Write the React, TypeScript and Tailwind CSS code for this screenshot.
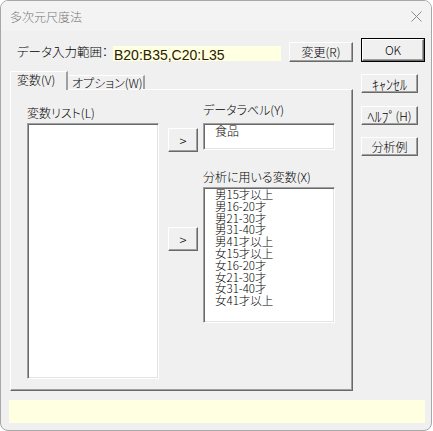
const jp = "font-['Noto_Sans_CJK_JP',sans-serif] [font-feature-settings:'palt'] font-light text-black";

const raised =
  "flex items-center justify-center border border-t-white border-l-white border-r-[#696969] border-b-[#696969] bg-[#f0f0f0] shadow-[inset_-1px_-1px_0_#a0a0a0] text-[12px] leading-none whitespace-nowrap";

const sunken =
  "border border-t-[#a0a0a0] border-l-[#a0a0a0] border-r-white border-b-white bg-white shadow-[inset_1px_1px_0_#696969,inset_-1px_-1px_0_#e3e3e3]";

const items = [
  "男15才以上",
  "男16-20才",
  "男21-30才",
  "男31-40才",
  "男41才以上",
  "女15才以上",
  "女16-20才",
  "女21-30才",
  "女31-40才",
  "女41才以上",
];

export default function App() {
  return (
    <div className={`w-[433px] h-[431px] bg-white ${jp}`}>
      <div className="w-[432px] h-[431px] flex flex-col bg-[#f0f0f0] border border-[#a8a8a8] rounded-[8px] overflow-hidden">
        {/* title bar */}
        <div className="h-[30px] shrink-0 flex items-center justify-between bg-[#f3f3f3] pl-[9px] pr-[9px]">
          <span className="text-[12px] text-[#777] mt-[1px]">多次元尺度法</span>
          <svg width="11" height="11" viewBox="0 0 11 11" className="mt-[1px]">
            <path d="M0.5 0.5 L10.5 10.5 M10.5 0.5 L0.5 10.5" stroke="#8a8a8a" strokeWidth="1" />
          </svg>
        </div>

        <div className="flex">
          {/* left column */}
          <div className="ml-[9px] w-[343px]">
            <div className="mt-[7px] h-[24px] flex items-start">
              <span className="ml-[7px] mt-[6px] text-[12.5px] leading-[16px] w-[96px] whitespace-nowrap">データ入力範囲：</span>
              <div className="mt-[8px] h-[15px] w-[168px] bg-[#ffffe1] flex items-center pl-[1px]">
                <span className="font-['Liberation_Sans',sans-serif] font-normal text-[14px] text-[#2a2000] leading-none mt-[2px]">
                  B20:B35,C20:L35
                </span>
              </div>
              <button className={`${raised} ml-[8px] mt-[4px] w-[64px] h-[20px]`}>変更(R)</button>
            </div>

            {/* tabs */}
            <div className="mt-[9px] h-[18px] flex items-end">
              <div className="relative z-10 -mb-[1px] h-[19px] w-[58px] bg-[#f0f0f0] border-l border-t border-white border-r-2 border-r-[#a0a0a0] flex items-start pl-[6px] pt-[1px] text-[12px] leading-[14px] whitespace-nowrap">
                変数(V)
              </div>
              <div className="h-[14px] w-[77px] border-t border-white border-r-2 border-r-[#a0a0a0] flex items-start pl-[4px] text-[12px] leading-[13px] whitespace-nowrap">
                オプション(W)
              </div>
            </div>

            {/* panel */}
            <div className="h-[302px] border border-t-white border-l-white border-r-[#696969] border-b-[#696969] shadow-[inset_-1px_-1px_0_#a0a0a0] flex">
              <div className="ml-[16px] w-[132px] pt-[16px]">
                <div className="h-[14px] text-[12px] leading-[14px]">変数リスト(L)</div>
                <div className={`${sunken} mt-[3px] h-[256px]`} />
              </div>

              <div className="ml-[9px] w-[30px] flex flex-col">
                <button className={`${raised} mt-[38px] h-[24px] w-[30px] text-[13px]`}>&gt;</button>
                <button className={`${raised} mt-[75px] h-[24px] w-[30px] text-[13px]`}>&gt;</button>
              </div>

              <div className="ml-[5px] w-[132px] pt-[13px]">
                <div className="h-[14px] text-[12px] leading-[14px]">データラベル(Y)</div>
                <div className={`${sunken} mt-[6px] h-[27px] pl-[11px] pt-[1px] text-[12px] leading-[12px]`}>
                  食品
                </div>
                <div className="mt-[20px] h-[14px] text-[12px] leading-[14px]">分析に用いる変数(X)</div>
                <div className={`${sunken} mt-[3px] h-[136px] pl-[11px] pt-[1px] text-[11.5px] leading-[11.8px]`}>
                  {items.map((t) => (
                    <div key={t} className="h-[11.8px] whitespace-nowrap">
                      {t}
                    </div>
                  ))}
                </div>
              </div>
            </div>
          </div>

          {/* right column */}
          <div className="ml-[8px] mt-[7px] flex flex-col">
            <div className="w-[64px] h-[24px] border border-black">
              <button className={`${raised} w-full h-full`}>OK</button>
            </div>
            <button className={`${raised} mt-[12px] w-[57px] h-[19px] text-[14px]`}>ｷｬﾝｾﾙ</button>
            <button className={`${raised} mt-[13px] w-[57px] h-[19px] text-[14px]`}>
              ﾍﾙﾌﾟ<span className="text-[12px]">(H)</span>
            </button>
            <button className={`${raised} mt-[12px] w-[57px] h-[19px]`}>分析例</button>
          </div>
        </div>

        {/* status bar */}
        <div className="mt-[9px] ml-[8px] w-[416px] h-[23px] bg-[#ffffe1]" />
      </div>
    </div>
  );
}
